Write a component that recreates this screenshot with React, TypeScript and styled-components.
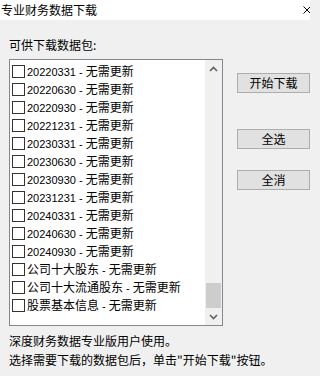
import React from 'react';
import styled, { createGlobalStyle } from 'styled-components';

const GlobalStyle = createGlobalStyle`
  html, body {
    margin: 0;
    padding: 0;
    background: #f0f0f0;
  }
  body {
    width: 310px;
    height: 376px;
    overflow: hidden;
    font-family: "Liberation Sans", "Noto Sans CJK SC", sans-serif;
    font-size: 12px;
    color: #000;
  }
`;

const PACKAGES = [
  '20220331',
  '20220630',
  '20220930',
  '20221231',
  '20230331',
  '20230630',
  '20230930',
  '20231231',
  '20240331',
  '20240630',
  '20240930',
  '公司十大股东',
  '公司十大流通股东',
  '股票基本信息',
];

// CJK runs get their own size, latin text stays a bit smaller like Tahoma
const mixed = (text: string) =>
  text
    .split(/([\u4e00-\u9fff\uff0c\u3002]+)/)
    .filter(Boolean)
    .map((part, i) =>
      /[\u4e00-\u9fff\uff0c\u3002]/.test(part) ? <Cjk key={i}>{part}</Cjk> : <Latin key={i}>{part}</Latin>,
    );

const App: React.FC = () => {
  return (
    <Window>
      <GlobalStyle />
      <TitleBar>
        <TitleText>专业财务数据下载</TitleText>
        <CloseIcon viewBox="0 0 8 8">
          <path d="M0.5 0.5 L7.5 7.5 M7.5 0.5 L0.5 7.5" stroke="#000" strokeWidth="1" />
        </CloseIcon>
      </TitleBar>
      <Body>
        <Label>可供下载数据包:</Label>
        <MainRow>
          <ListBox>
            <ListItems>
              {PACKAGES.map((name) => (
                <Row key={name}>
                  <Checkbox />
                  <RowText>{mixed(`${name} - 无需更新`)}</RowText>
                </Row>
              ))}
            </ListItems>
            <ScrollBar>
              <ArrowBox>
                <svg width="9" height="6" viewBox="0 0 9 6">
                  <path d="M1 5 L4.5 1.5 L8 5" stroke="#606060" strokeWidth="1.6" fill="none" />
                </svg>
              </ArrowBox>
              <Track>
                <Thumb />
              </Track>
              <ArrowBox>
                <svg width="9" height="6" viewBox="0 0 9 6">
                  <path d="M1 1 L4.5 4.5 L8 1" stroke="#606060" strokeWidth="1.6" fill="none" />
                </svg>
              </ArrowBox>
            </ScrollBar>
          </ListBox>
          <ButtonColumn>
            <Button>开始下载</Button>
            <Button $gap={36}>全选</Button>
            <Button $gap={21}>全消</Button>
          </ButtonColumn>
        </MainRow>
        <Footer>
          <div>深度财务数据专业版用户使用。</div>
          <div>选择需要下载的数据包后，单击"开始下载"按钮。</div>
        </Footer>
      </Body>
    </Window>
  );
};

export default App;

const Window = styled.div`
  width: 310px;
  height: 376px;
  display: flex;
  flex-direction: column;
  background: #f0f0f0;
`;

const TitleBar = styled.div`
  height: 20px;
  background: #fff;
  display: flex;
  align-items: center;
  justify-content: space-between;
  padding-left: 1px;
`;

const TitleText = styled.div`
  font-family: "Noto Sans CJK SC", sans-serif;
  font-size: 12px;
  line-height: 16px;
`;

const CloseIcon = styled.svg`
  width: 8px;
  height: 8px;
  margin-right: -1px;
  margin-top: -1px;
`;

const Body = styled.div`
  padding: 17px 0 0 9px;
  display: flex;
  flex-direction: column;
`;

const Label = styled.div`
  font-family: "Noto Sans CJK SC", sans-serif;
  font-size: 12px;
  line-height: 16px;
  height: 16px;
`;

const MainRow = styled.div`
  margin-top: 6px;
  display: flex;
  align-items: flex-start;
`;

const ListBox = styled.div`
  width: 215px;
  height: 267px;
  box-sizing: border-box;
  border: 1px solid #828790;
  background: #fff;
  display: flex;
`;

const ListItems = styled.div`
  flex: 1;
  padding: 2px 0 0 2px;
  overflow: hidden;
`;

const Row = styled.div`
  height: 18px;
  display: flex;
  align-items: center;
`;

const Checkbox = styled.div`
  width: 13px;
  height: 13px;
  box-sizing: border-box;
  border: 1px solid #333;
  background: #fff;
  margin-right: 2px;
  flex-shrink: 0;
`;

const RowText = styled.div`
  white-space: nowrap;
  line-height: 16px;
`;

const Cjk = styled.span`
  font-family: "Noto Sans CJK SC", sans-serif;
  font-size: 12px;
`;

const Latin = styled.span`
  font-family: "Liberation Sans", sans-serif;
  font-size: 11px;
`;

const ScrollBar = styled.div`
  width: 17px;
  display: flex;
  flex-direction: column;
  background: #f0f0f0;
`;

const ArrowBox = styled.div`
  height: 17px;
  display: flex;
  align-items: center;
  justify-content: center;
`;

const Track = styled.div`
  flex: 1;
  display: flex;
  flex-direction: column;
  justify-content: flex-end;
  align-items: center;
`;

const Thumb = styled.div`
  width: 15px;
  height: 25px;
  background: #cdcdcd;
`;

const ButtonColumn = styled.div`
  margin-left: 14px;
  margin-top: 14px;
  display: flex;
  flex-direction: column;
`;

const Button = styled.div<{ $gap?: number }>`
  width: 73px;
  height: 20px;
  box-sizing: border-box;
  margin-top: ${(p) => p.$gap ?? 0}px;
  border: 1px solid #adadad;
  background: #e1e1e1;
  display: flex;
  align-items: center;
  justify-content: center;
  font-family: "Noto Sans CJK SC", sans-serif;
  font-size: 12px;
  line-height: 16px;
`;

const Footer = styled.div`
  margin-top: 5px;
  font-family: "Noto Sans CJK SC", sans-serif;
  font-size: 12px;
  line-height: 19px;
`;
